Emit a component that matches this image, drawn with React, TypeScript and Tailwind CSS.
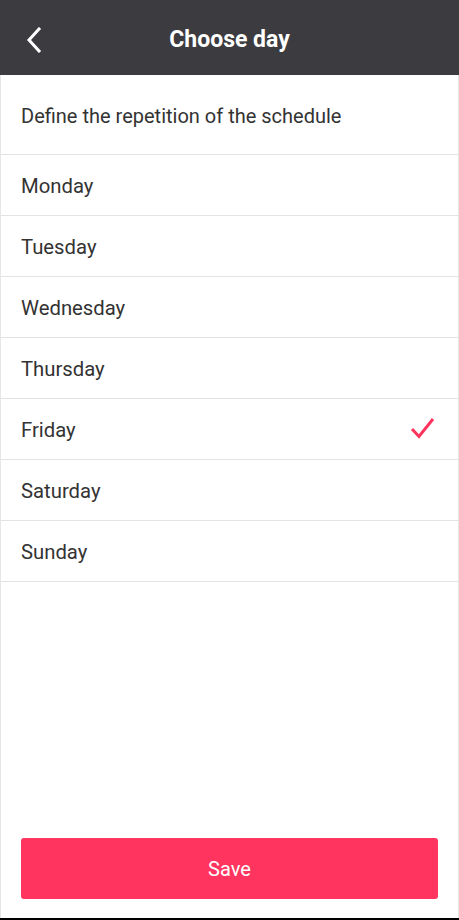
import React from "react";

const days = ["Monday", "Tuesday", "Wednesday", "Thursday", "Friday", "Saturday", "Sunday"];

export default function App() {
  const selected = "Friday";
  return (
    <div
      className="w-[459px] h-[920px] flex flex-col bg-white border-b-2 border-black"
      style={{ fontFamily: "Roboto, 'Noto Sans', sans-serif" }}
    >
      <header className="h-[75px] shrink-0 bg-[#3c3b40] flex items-center relative">
        <button className="absolute left-[24px] top-[26px] w-[20px] h-[28px] flex items-center justify-center">
          <svg width="16" height="26" viewBox="0 0 16 26" fill="none">
            <path d="M13 2 L3 13 L13 24" stroke="white" strokeWidth="3" strokeLinecap="square" strokeLinejoin="miter" />
          </svg>
        </button>
        <h1 className="w-full text-center text-white text-[23px] font-bold leading-none pt-[4px]">Choose day</h1>
      </header>
      <div className="flex-1 flex flex-col border-x border-[#e6e6e6]">
        <div className="h-[80px] flex items-center px-[20px] pt-[2px] border-b border-[#e3e3e3] text-[20px] text-[#333333]">
          Define the repetition of the schedule
        </div>
        {days.map((d) => (
          <div
            key={d}
            className="h-[61px] flex items-center justify-between px-[20px] pt-[3px] border-b border-[#e3e3e3] text-[20.3px] text-[#333333]"
          >
            <span>{d}</span>
            {d === selected && (
              <svg width="26" height="24" viewBox="0 0 26 24" fill="none" className="mr-[2px] -mt-[3px]">
                <path d="M2 12 L9 19.5 L23 2" stroke="#ff3560" strokeWidth="3" strokeLinecap="butt" strokeLinejoin="miter" />
              </svg>
            )}
          </div>
        ))}
        <div className="flex-1" />
        <div className="px-[20px] pb-[19px]">
          <button className="w-full h-[61px] rounded-[3px] bg-[#ff3560] text-white text-[20px]">Save</button>
        </div>
      </div>
    </div>
  );
}
